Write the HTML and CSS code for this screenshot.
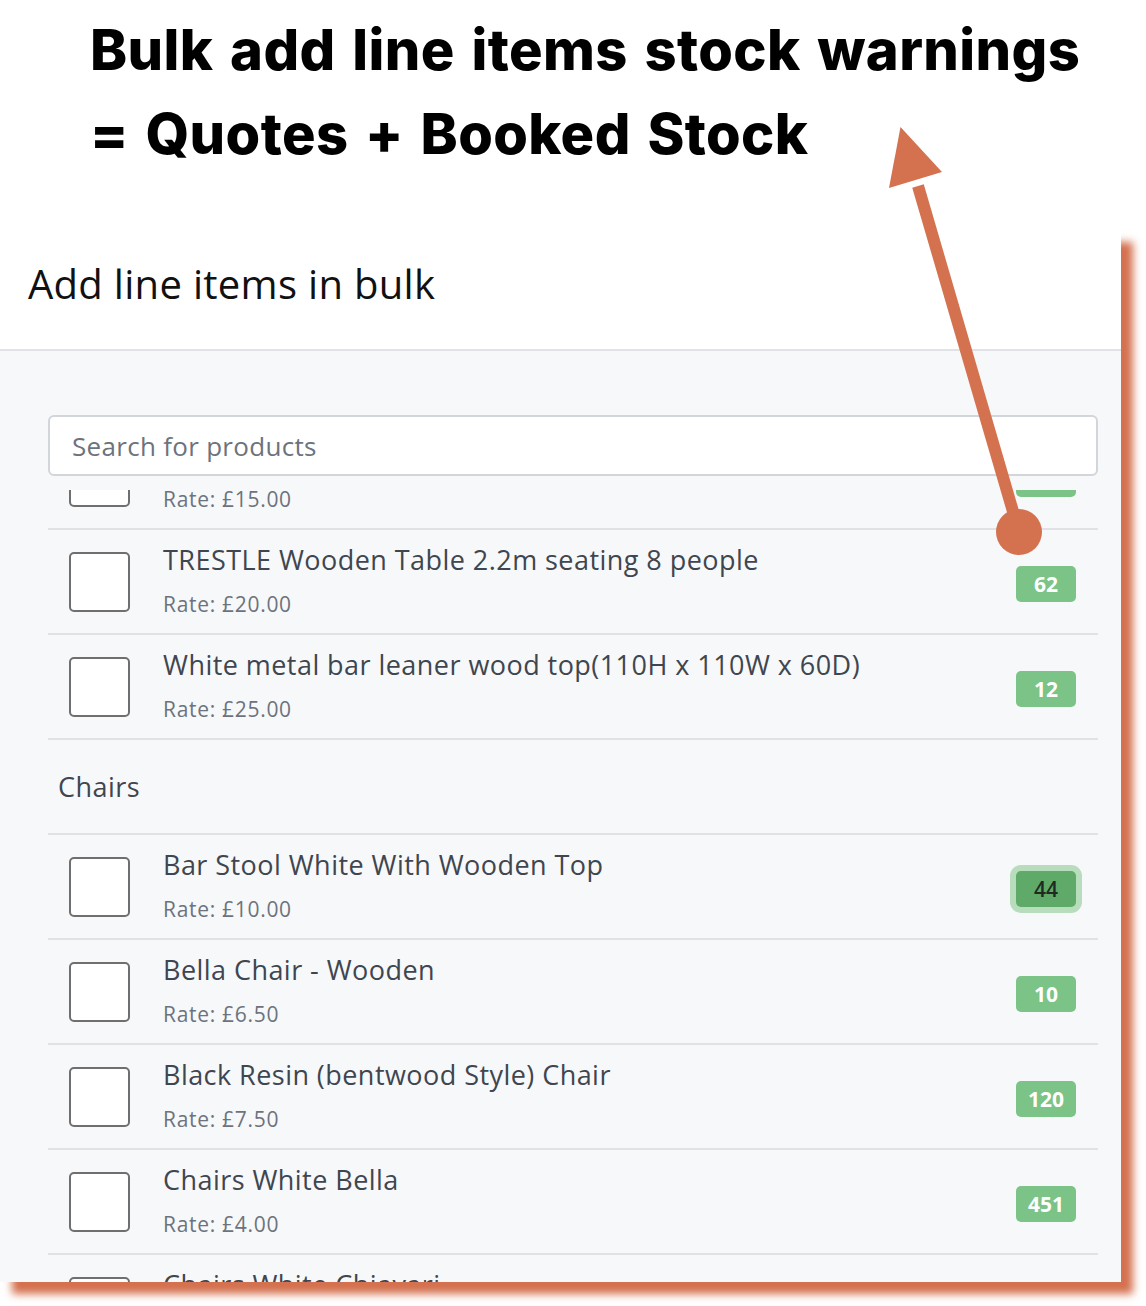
FILE: index.html
```html
<!DOCTYPE html>
<html lang="en">
<head>
<meta charset="utf-8">
<title>Bulk add line items stock warnings</title>
<link rel="stylesheet" href="styles.css">
</head>
<body>
<div class="page">
  <header class="banner">
    <h1 class="banner-title">Bulk add line items stock warnings<br>= Quotes + Booked Stock</h1>
  </header>

  <section class="modal">
    <div class="modal-header">
      <h2 class="modal-title">Add line items in bulk</h2>
    </div>
    <div class="modal-body">
      <div class="search">
        <input class="search-input" type="text" placeholder="Search for products">
      </div>
      <div class="list-viewport">
        <div class="list">
          <div class="row">
            <span class="checkbox"></span>
            <div class="item-text">
              <div class="item-name">TRESTLE Wooden Table 1.8m seating 6 people</div>
              <div class="item-rate">Rate: £15.00</div>
            </div>
            <span class="badge">38</span>
          </div>
          <div class="row">
            <span class="checkbox"></span>
            <div class="item-text">
              <div class="item-name">TRESTLE Wooden Table 2.2m seating 8 people</div>
              <div class="item-rate">Rate: £20.00</div>
            </div>
            <span class="badge">62</span>
          </div>
          <div class="row">
            <span class="checkbox"></span>
            <div class="item-text">
              <div class="item-name">White metal bar leaner wood top(110H x 110W x 60D)</div>
              <div class="item-rate">Rate: £25.00</div>
            </div>
            <span class="badge">12</span>
          </div>
          <div class="group">Chairs</div>
          <div class="row">
            <span class="checkbox"></span>
            <div class="item-text">
              <div class="item-name">Bar Stool White With Wooden Top</div>
              <div class="item-rate">Rate: £10.00</div>
            </div>
            <span class="badge badge-focus">44</span>
          </div>
          <div class="row">
            <span class="checkbox"></span>
            <div class="item-text">
              <div class="item-name">Bella Chair - Wooden</div>
              <div class="item-rate">Rate: £6.50</div>
            </div>
            <span class="badge">10</span>
          </div>
          <div class="row">
            <span class="checkbox"></span>
            <div class="item-text">
              <div class="item-name">Black Resin (bentwood Style) Chair</div>
              <div class="item-rate">Rate: £7.50</div>
            </div>
            <span class="badge">120</span>
          </div>
          <div class="row">
            <span class="checkbox"></span>
            <div class="item-text">
              <div class="item-name">Chairs White Bella</div>
              <div class="item-rate">Rate: £4.00</div>
            </div>
            <span class="badge">451</span>
          </div>
          <div class="row">
            <span class="checkbox"></span>
            <div class="item-text">
              <div class="item-name">Chairs White Chiavari</div>
              <div class="item-rate">Rate: £5.00</div>
            </div>
            <span class="badge">200</span>
          </div>
        </div>
      </div>
    </div>
  </section>

  <svg class="arrow" width="1146" height="1306" viewBox="0 0 1146 1306" aria-hidden="true">
    <line x1="1019" y1="532" x2="918" y2="186" stroke="#d4714f" stroke-width="12"/>
    <polygon points="900.5,127 889,188 942,172" fill="#d4714f"/>
    <circle cx="1019" cy="532" r="23" fill="#d4714f"/>
  </svg>
</div>
</body>
</html>
```

FILE: styles.css
```css
* {
  box-sizing: border-box;
}

html, body {
  margin: 0;
  padding: 0;
  background: #ffffff;
}

body {
  font-family: "Open Sans", "Noto Sans", "Liberation Sans", sans-serif;
  width: 1146px;
  height: 1306px;
  overflow: hidden;
}

.page {
  position: relative;
  width: 1146px;
  height: 1306px;
}

/* ---------- banner ---------- */
.banner {
  height: 230px;
  padding: 8px 0 0 90px;
}

.banner-title {
  margin: 0;
  font-family: "Inter", "Liberation Sans", sans-serif;
  font-weight: 800;
  font-size: 56px;
  line-height: 84px;
  letter-spacing: 0.4px;
  word-spacing: 4px;
  color: #000000;
}

/* ---------- modal ---------- */
.modal {
  width: 1121px;
  height: 1052px;
  display: flex;
  flex-direction: column;
  background: #f7f8fa;
  box-shadow: 12px 12px 8px #d4714f;
  overflow: hidden;
}

.modal-header {
  height: 121px;
  flex: none;
  display: flex;
  align-items: center;
  padding: 0 0 12px 28px;
  background: #ffffff;
  border-bottom: 2px solid #e0e2e6;
}

.modal-title {
  margin: 0;
  font-weight: 400;
  font-size: 40px;
  letter-spacing: 0.3px;
  color: #111111;
}

.modal-body {
  flex: 1;
  min-height: 0;
  display: flex;
  flex-direction: column;
  padding: 64px 23px 0 48px;
}

.search {
  flex: none;
  margin-bottom: 14px;
}

.search-input {
  display: block;
  width: 100%;
  height: 61px;
  margin: 0;
  padding: 0 22px;
  border: 2px solid #d2d5da;
  border-radius: 6px;
  background: #ffffff;
  font-family: inherit;
  font-size: 26px;
  letter-spacing: 0.3px;
  color: #374151;
  outline: none;
}

.search-input::placeholder {
  color: #6c737d;
  opacity: 1;
}

.list-viewport {
  flex: 1;
  min-height: 0;
  overflow: hidden;
}

.list {
  margin-top: -65px;
}

.row {
  height: 105px;
  display: flex;
  align-items: flex-start;
  padding: 0 22px 0 21px;
  border-bottom: 2px solid #e0e2e6;
}

.checkbox {
  flex: none;
  width: 61px;
  height: 60px;
  margin-top: 22px;
  border: 2px solid #6f6f6f;
  border-radius: 5px;
  background: #ffffff;
}

.item-text {
  flex: 1;
  min-width: 0;
  margin-left: 33px;
  padding-top: 13px;
}

.item-name {
  font-size: 27px;
  line-height: 34px;
  letter-spacing: 0.45px;
  color: #3f464f;
  white-space: nowrap;
}

.item-rate {
  margin-top: 13px;
  font-size: 21px;
  line-height: 28px;
  letter-spacing: 0.7px;
  color: #6c737d;
}

.badge {
  flex: none;
  width: 60px;
  height: 36px;
  margin-top: 36px;
  display: flex;
  align-items: center;
  justify-content: center;
  border-radius: 5px;
  background: #7bc386;
  color: #ffffff;
  font-weight: 700;
  font-size: 21px;
}

.badge-focus {
  background: #5fa969;
  color: #1f2a22;
  font-weight: 600;
  box-shadow: 0 0 0 6px #b7ddbc;
}

.group {
  height: 95px;
  display: flex;
  align-items: center;
  padding-left: 10px;
  border-bottom: 2px solid #e0e2e6;
  font-size: 27px;
  letter-spacing: 0.45px;
  color: #3f464f;
}

/* ---------- annotation arrow ---------- */
.arrow {
  position: absolute;
  top: 0;
  left: 0;
  pointer-events: none;
}
```
